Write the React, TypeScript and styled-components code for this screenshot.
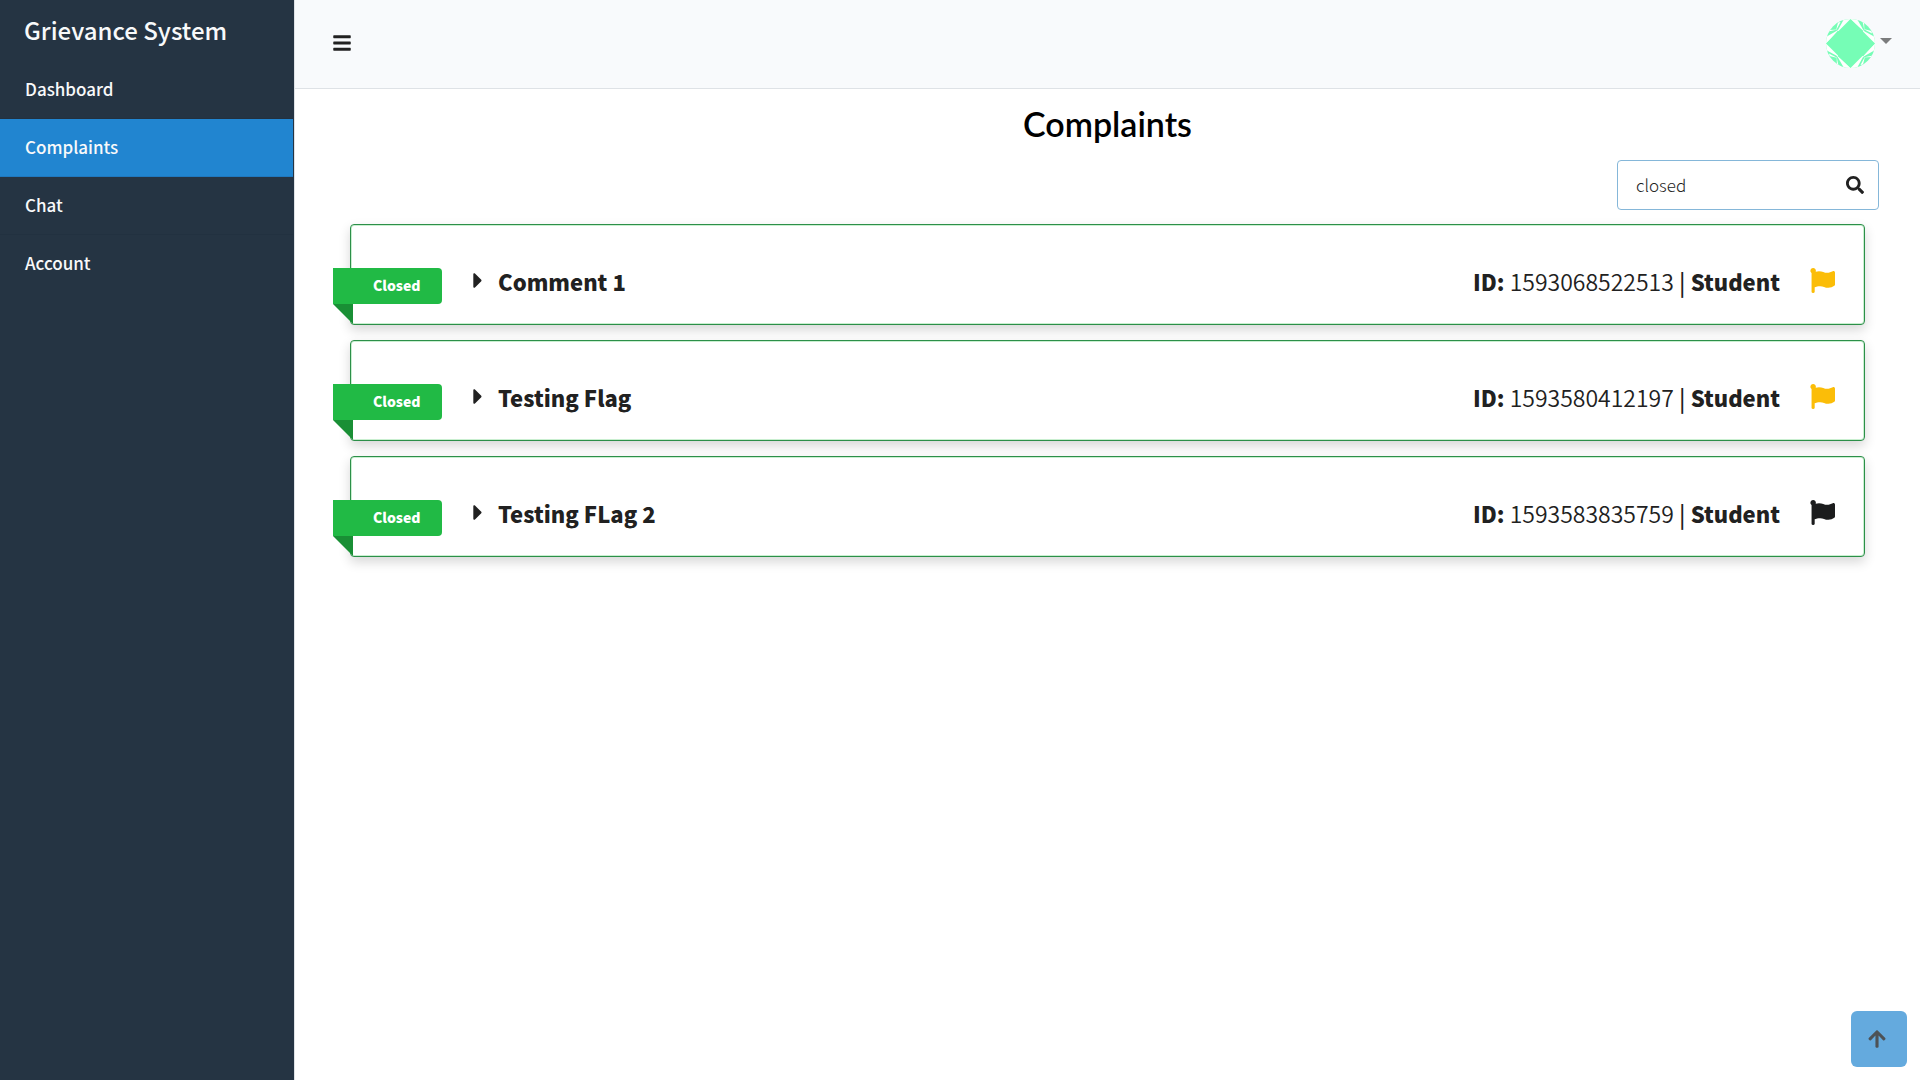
import React, { useState } from "react";
import styled, { createGlobalStyle } from "styled-components";
import { FaBars, FaFlag, FaSearch, FaArrowUp, FaCaretRight } from "react-icons/fa";

const sans = `"Noto Sans CJK SC", "Noto Sans", sans-serif`;

const GlobalStyle = createGlobalStyle`
  *, *::before, *::after { box-sizing: border-box; }
  body { margin: 0; background: #fff; color: #212529; font-family: ${sans}; }
  button, input { font-family: inherit; }
`;

const Layout = styled.div`
  display: flex;
  min-height: 100vh;
`;

const Sidebar = styled.aside`
  flex: 0 0 295px;
  background: #253443;
  border-right: 1px solid #dee2e6;
`;

const Brand = styled.div`
  height: 61px;
  padding: 0 24px;
  line-height: 60px;
  font-size: 24px;
  font-weight: 500;
  color: #f8f9fa;
`;

const NavItem = styled.a<{ $active?: boolean }>`
  display: block;
  height: 58px;
  margin-right: 1px;
  padding: 0 25px;
  border-bottom: 1px solid ${(p) => (p.$active ? "#1f78bf" : "#223140")};
  background: ${(p) => (p.$active ? "#2185d0" : "transparent")};
  color: #f8f9fa;
  font-size: 17px;
  font-weight: 500;
  line-height: 56px;
  text-decoration: none;

  &:last-child {
    border-bottom: 0;
  }
`;

const Content = styled.div`
  flex: 1;
  min-width: 0;
`;

const Topbar = styled.header`
  display: flex;
  align-items: center;
  justify-content: space-between;
  height: 89px;
  padding: 0 28px 2px 37px;
  background: #f8fafc;
  border-bottom: 1px solid #dee2e6;
`;

const IconButton = styled.button`
  display: flex;
  align-items: center;
  gap: 5px;
  padding: 0;
  border: 0;
  background: none;
  color: #212121;
  font-size: 20px;
  cursor: pointer;
`;

const MenuCaret = styled.span`
  margin-bottom: 4px;
  border: 6px solid transparent;
  border-top-color: #7b7c7d;
  border-bottom: 0;
`;

const Main = styled.main`
  padding: 11px 38px 0;
`;

const Heading = styled.h1`
  margin: 0;
  font-family: Lato, sans-serif;
  font-size: 34px;
  font-weight: 600;
  line-height: 48px;
  text-align: center;
  color: #000;
`;

const SearchBox = styled.label`
  display: flex;
  align-items: center;
  width: 262px;
  height: 50px;
  margin: 12px 3px 14px auto;
  padding: 0 14px 0 18px;
  border: 1px solid #85b7d9;
  border-radius: 4px;
  color: #212121;
  font-size: 18px;
`;

const SearchInput = styled.input`
  flex: 1;
  min-width: 0;
  height: 46px;
  padding: 0 0 2px;
  border: 0;
  outline: 0;
  background: none;
  color: #222;
  font-size: 17px;
  font-weight: 300;
`;

const List = styled.div`
  display: grid;
  gap: 15px;
  padding: 0 17px;
`;

const Card = styled.article`
  position: relative;
  display: flex;
  align-items: center;
  height: 101px;
  padding: 12px 29px 0 117px;
  border: 1px solid #2c8f49;
  border-radius: 4px;
  background: #fff;
  color: #212121;
  box-shadow: inset 0 0 0 1px #c9efd0, 0 5px 12px rgba(0, 0, 0, 0.16);
`;

const Ribbon = styled.span`
  position: absolute;
  top: 43px;
  left: -18px;
  width: 109px;
  height: 36px;
  padding-left: 40px;
  border-radius: 0 4px 4px 0;
  background: #21ba45;
  color: #fff;
  font-size: 14px;
  font-weight: 900;
  line-height: 34px;

  &::after {
    content: "";
    position: absolute;
    top: 100%;
    left: 0;
    border: 0 solid transparent;
    border-width: 0 20px 20px 0;
    border-right-color: #198f35;
  }
`;

const Toggle = styled.button`
  display: flex;
  align-items: center;
  gap: 10px;
  padding: 0;
  border: 0;
  background: none;
  color: inherit;
  font-size: 22px;
  font-weight: 900;
  cursor: pointer;

  svg {
    width: 20px;
    height: 25px;
  }
`;

const Meta = styled.div`
  margin-left: auto;
  margin-right: 30px;
  font-size: 23px;
  font-weight: 350;

  b {
    font-weight: 900;
    font-size: 22px;
  }

  span {
    font-weight: 500;
  }
`;

const FlagButton = styled(IconButton)<{ $flagged: boolean }>`
  color: ${(p) => (p.$flagged ? "#fbbd08" : "#1b1c1d")};
  font-size: 25px;
`;

const ScrollTop = styled.button`
  position: fixed;
  right: 13px;
  bottom: 13px;
  display: flex;
  align-items: center;
  justify-content: center;
  width: 56px;
  height: 56px;
  padding: 0 4px 0 0;
  border: 0;
  border-radius: 6px;
  background: #64aade;
  color: #4d5256;
  font-size: 20px;
  cursor: pointer;
`;

const pages = ["Dashboard", "Complaints", "Chat", "Account"];

const complaints = [
  { title: "Comment 1", id: "1593068522513", flagged: true },
  { title: "Testing Flag", id: "1593580412197", flagged: true },
  { title: "Testing FLag 2", id: "1593583835759", flagged: false },
];

const Avatar = () => (
  <svg width="49" height="49" viewBox="0 0 49 49" aria-hidden="true">
    <clipPath id="round"><circle cx="24.5" cy="24.5" r="24.5" /></clipPath>
    <g clipPath="url(#round)">
      <rect width="49" height="49" fill="#76fdb6" />
      {[0, 90, 180, 270].map((a) => (
        <g key={a} transform={`rotate(${a} 24.5 24.5)`} fill="#fff">
          <path d="M26 -1 18 0 11.500 12 14.500 12z" />
          <path d="M13 10.500 0 18 -1 26z" />
          <path d="M10 11.500 14.500 3 12 3.500z" />
          <path d="M12 10.500 3 11 2 12.500z" />
        </g>
      ))}
      <path d="M24.5 0 49 24.5 24.5 49 0 24.5z" fill="#76fdb6" />
    </g>
  </svg>
);

export default function App() {
  const [query, setQuery] = useState("closed");
  return (
    <Layout>
      <GlobalStyle />
      <Sidebar>
        <Brand>Grievance System</Brand>
        <nav>
          {pages.map((page) => (
            <NavItem key={page} href={`#${page.toLowerCase()}`} $active={page === "Complaints"}>
              {page}
            </NavItem>
          ))}
        </nav>
      </Sidebar>
      <Content>
        <Topbar>
          <IconButton aria-label="Toggle sidebar"><FaBars /></IconButton>
          <IconButton aria-label="Account menu"><Avatar /><MenuCaret /></IconButton>
        </Topbar>
        <Main>
          <Heading>Complaints</Heading>
          <SearchBox>
            <SearchInput aria-label="Search complaints" value={query} onChange={(e) => setQuery(e.target.value)} />
            <FaSearch />
          </SearchBox>
          <List>
            {complaints.map((c) => (
              <Card key={c.id}>
                <Ribbon>Closed</Ribbon>
                <Toggle><FaCaretRight />{c.title}</Toggle>
                <Meta><b>ID:</b> {c.id} <span>|</span> <b>Student</b></Meta>
                <FlagButton $flagged={c.flagged} aria-label="Flag complaint"><FaFlag /></FlagButton>
              </Card>
            ))}
          </List>
        </Main>
      </Content>
      <ScrollTop aria-label="Back to top"><FaArrowUp /></ScrollTop>
    </Layout>
  );
}
